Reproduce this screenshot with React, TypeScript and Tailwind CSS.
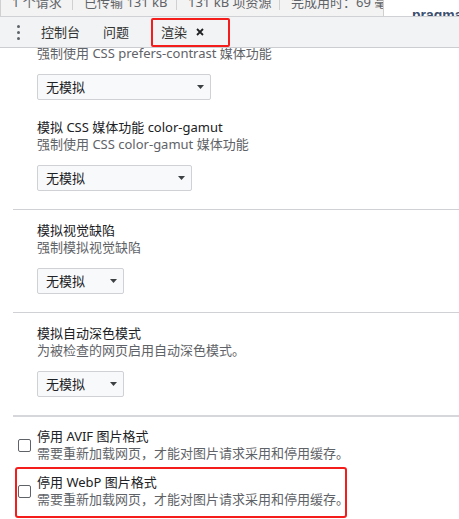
import React from 'react';

// Chrome DevTools "渲染" drawer, scrolled part way down

const Arrow = () => (
  <svg width="7" height="4" viewBox="0 0 7 4" className="shrink-0">
    <path d="M0 0 H7 L3.5 4 Z" fill="#3c4043" />
  </svg>
);

const Select = ({ width }: { width: string }) => (
  <div className={`${width} h-[26px] flex items-center justify-between pl-[8px] pr-[6px] bg-[#f8f9fa] border border-[#cfd1d4] rounded-[2px] text-[#202124]`}>
    <span className="leading-[17px]">无模拟</span>
    <Arrow />
  </div>
);

const Divider = ({ thick }: { thick?: boolean }) => (
  <div className={thick ? 'ml-[13px] border-t-2 border-[#d5d7da]' : 'ml-[13px] border-t border-[#cfd1d4]'} />
);

const Setting = ({ title, desc, width }: { title: string; desc: string; width: string }) => (
  <div className="pl-[37px] pt-[12px] pb-[18px]">
    <div className="leading-[17px] text-[#202124]">{title}</div>
    <div className="leading-[17px] text-[#5f6368]">{desc}</div>
    <div className="mt-[12px]">
      <Select width={width} />
    </div>
  </div>
);

const CheckRow = ({ title, desc }: { title: string; desc: string }) => (
  <div className="flex">
    <div className="ml-[18px] mt-[11px] w-[13px] h-[13px] shrink-0 border border-[#5f6368] rounded-[2px] bg-white" />
    <div className="ml-[6px]">
      <div className="leading-[17px] text-[#202124]">{title}</div>
      <div className="leading-[17px] text-[#5f6368] whitespace-nowrap">{desc}</div>
    </div>
  </div>
);

const statusItems = [
  { text: '1 个请求', w: 'w-[71px]' },
  { text: '已传输 131 kB', w: 'w-[104px]' },
  { text: '131 kB 项资源', w: 'w-[103px]' },
  { text: '完成用时：69 毫秒', w: 'w-[104px]' },
];

export default function App() {
  return (
    <div className="relative w-[459px] h-[519px] overflow-hidden bg-white text-[13px] font-['Noto_Sans','Noto_Sans_CJK_SC',sans-serif]">
      {/* Network summary bar, cut off at the top */}
      <div className="flex h-[17px] border-b border-[#cfd1d4]">
        <div className="flex w-[384px] shrink-0 overflow-hidden bg-[#f3f3f3] border-l border-r border-[#d0d0d0] text-[#5f6368]">
          {statusItems.map((item, i) => (
            <div key={i} className={`${item.w} shrink-0 flex ${i > 0 ? 'border-l border-[#d0d0d0] h-[10px]' : ''}`}>
              <span className="pl-[11px] -mt-[6px] leading-[17px] whitespace-nowrap">{item.text}</span>
            </div>
          ))}
        </div>
        <div className="flex-1 overflow-hidden bg-white pl-[28px] pt-[6px]">
          <span className="font-['Liberation_Sans',sans-serif] font-bold text-[14px] leading-[14px] text-[#3d4f70]">pragma</span>
        </div>
      </div>

      {/* Drawer tabs */}
      <div className="flex items-center h-[31px] bg-[#f1f3f4] border-b border-[#cbcdd1] text-[#333333]">
        <div className="ml-[17px] flex flex-col gap-[3px]">
          <span className="w-[3px] h-[3px] rounded-full bg-[#5f6368]" />
          <span className="w-[3px] h-[3px] rounded-full bg-[#5f6368]" />
          <span className="w-[3px] h-[3px] rounded-full bg-[#5f6368]" />
        </div>
        <span className="ml-[21px] leading-[17px]">控制台</span>
        <span className="ml-[23px] leading-[17px]">问题</span>
        <span className="ml-[32px] leading-[17px]">渲染</span>
        <svg width="8" height="8" viewBox="0 0 8 8" className="ml-[9px]">
          <path d="M1 1 L7 7 M7 1 L1 7" stroke="#202124" strokeWidth="1.8" />
        </svg>
      </div>

      {/* Rendering settings */}
      <div className="h-[471px] overflow-hidden">
        <div className="-mt-[3px]">
          <div className="pl-[37px] pb-[18px]">
            <div className="leading-[17px] text-[#5f6368]">强制使用 CSS prefers-contrast 媒体功能</div>
            <div className="mt-[12px]">
              <Select width="w-[174px]" />
            </div>
            <div className="mt-[19px] leading-[17px] text-[#202124]">模拟 CSS 媒体功能 color-gamut</div>
            <div className="leading-[17px] text-[#5f6368]">强制使用 CSS color-gamut 媒体功能</div>
            <div className="mt-[12px]">
              <Select width="w-[155px]" />
            </div>
          </div>
          <Divider />
          <Setting title="模拟视觉缺陷" desc="强制模拟视觉缺陷" width="w-[87px]" />
          <Divider />
          <Setting title="模拟自动深色模式" desc="为被检查的网页启用自动深色模式。" width="w-[87px]" />
          <Divider thick />
          <div className="pt-[11px] flex flex-col gap-[12px]">
            <CheckRow title="停用 AVIF 图片格式" desc="需要重新加载网页，才能对图片请求采用和停用缓存。" />
            <CheckRow title="停用 WebP 图片格式" desc="需要重新加载网页，才能对图片请求采用和停用缓存。" />
          </div>
        </div>
      </div>

      {/* annotation boxes */}
      <div className="absolute left-[151px] top-[18px] w-[79px] h-[29px] border-2 border-[#f51c1c] rounded-[2px]" />
      <div className="absolute left-[15px] top-[467px] w-[332px] h-[51px] border-2 border-[#f51c1c] rounded-[3px]" />
    </div>
  );
}
